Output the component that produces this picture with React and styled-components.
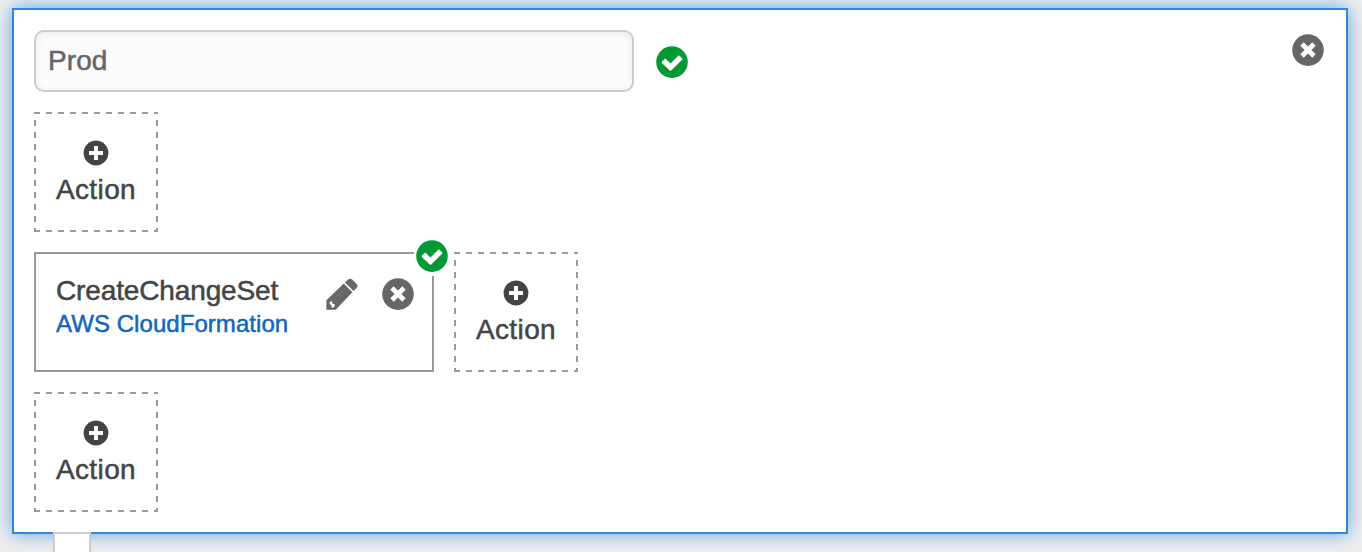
import React from "react";
import styled, { createGlobalStyle } from "styled-components";

const GlobalStyle = createGlobalStyle`
  * { box-sizing: border-box; }
  html, body { margin: 0; height: 100%; overflow: hidden; background: #eeeeee; }
  body { font-family: "Liberation Sans", Arial, sans-serif; color: #444444; }
`;

const Page = styled.main`
  height: 552px;
  padding: 8px 14px 0 12px;
  overflow: hidden;
`;

const Stage = styled.section`
  position: relative;
  display: flex;
  flex-direction: column;
  gap: 20px;
  height: 526px;
  padding: 20px;
  background: #ffffff;
  border: 2px solid #3388dd;
  box-shadow: 0 0 18px rgba(51, 140, 221, 0.74);
`;

const Header = styled.header`
  display: flex;
  align-items: flex-start;
  height: 62px;
`;

const NameInput = styled.input`
  width: 600px;
  height: 62px;
  padding: 0 12px;
  border: 2px solid #cccccc;
  border-radius: 10px;
  outline: none;
  background: #fcfcfc;
  box-shadow: inset 0 2px 8px rgba(0, 0, 0, 0.07);
  color: #666666;
  font: 28px "Liberation Sans", Arial, sans-serif;
  letter-spacing: 0.1px;
  -webkit-text-stroke: 0.5px;
`;

const HeaderStatus = styled.span`
  display: flex;
  margin: 16px auto 0 22px;
`;

const IconButton = styled.button`
  display: flex;
  padding: 0;
  border: 0;
  background: none;
  color: #666666;
  margin-top: ${(p) => p.$top || 0}px;
  margin-right: ${(p) => p.$right || 0}px;
`;

const Row = styled.div`
  display: flex;
  gap: 20px;
  height: 120px;
`;

const across = "repeating-linear-gradient(90deg, #999 0 6px, transparent 6px 12px)";
const down =
  "repeating-linear-gradient(180deg, #999 0 2px, transparent 2px 8px, #999 8px 12px)";

const AddBox = styled.button`
  display: flex;
  flex-direction: column;
  align-items: center;
  width: 124px;
  height: 120px;
  padding: 28px 0 0;
  border: 0;
  color: #444444;
  background: ${across} top / 100% 2px no-repeat, ${across} bottom / 100% 2px no-repeat,
    ${down} left / 2px 100% no-repeat, ${down} right / 2px 100% no-repeat;
  font: 28px/32px "Liberation Sans", Arial, sans-serif;
`;

const AddLabel = styled.span`
  margin-top: 8px;
  letter-spacing: 0.4px;
  -webkit-text-stroke: 0.5px;
`;

const ActionCard = styled.article`
  position: relative;
  display: flex;
  width: 400px;
  height: 120px;
  padding: 20px 18px 0 20px;
  border: 2px solid #999999;
`;

const Details = styled.div`
  flex: 1;
  white-space: nowrap;
`;

const ActionName = styled.div`
  font-size: 28px;
  line-height: 34px;
  letter-spacing: -0.13px;
  -webkit-text-stroke: 0.5px;
`;

const Provider = styled.div`
  color: #1166bb;
  font-size: 24px;
  line-height: 32px;
  letter-spacing: 0.06px;
  -webkit-text-stroke: 0.5px;
`;

const Badge = styled.span`
  position: absolute;
  top: -16px;
  right: -18px;
  display: flex;
  width: 36px;
  height: 38px;
  padding: 2px;
  background: #ffffff;
`;

const Connector = styled.div`
  position: absolute;
  left: 39px;
  bottom: -32px;
  width: 38px;
  height: 32px;
  border: 2px solid #cccccc;
  background: #ffffff;
`;

const CheckIcon = () => (
  <svg width="32" height="32" viewBox="0 0 32 32">
    <circle cx="16" cy="16.1" r="15.8" fill="#009933" />
    <path
      d="M5.8 15.7 8.5 13q.7-.6 1.3 0l4.7 4.6 7.7-7.8q.7-.6 1.4 0l2.6 2.6q.5.7 0 1.3L15.2 24.6q-.7.6-1.4 0l-8-7.7q-.5-.6 0-1.2Z"
      fill="#fff"
    />
  </svg>
);

const CloseIcon = () => (
  <svg width="32" height="32" viewBox="0 0 32 32">
    <circle cx="16" cy="16.1" r="15.8" fill="currentColor" />
    <path d="M10 10 22 22M22 10 10 22" stroke="#fff" strokeWidth="4.8" />
  </svg>
);

const PlusIcon = () => (
  <svg width="26" height="26" viewBox="0 0 26 26">
    <circle cx="13" cy="13" r="12.4" fill="currentColor" />
    <path d="M13 6v14M6 13h14" stroke="#fff" strokeWidth="4" />
  </svg>
);

const PencilIcon = () => (
  <svg width="32" height="32" viewBox="0 0 32 32">
    <path
      d="M.4 31.7V22.3L17.8 5.6l8.6 8.6L9.6 31.7ZM19 4.6l3.2-3.1q2-1.6 4 0l4.4 4.4q1.6 2 0 4l-3.1 3.2Z"
      fill="currentColor"
    />
    <path d="M3.7 23.8 6 23.2l.7 2.5 2.4.7-.9 2.6-2.4.9-.5-2.9-1.6-.7Z" fill="#fff" />
    <path d="M8.5 20.8 17.6 12" stroke="#777" strokeWidth="1" />
  </svg>
);

const AddAction = () => (
  <AddBox type="button">
    <PlusIcon />
    <AddLabel>Action</AddLabel>
  </AddBox>
);

export default function App() {
  return (
    <Page>
      <GlobalStyle />
      <Stage>
        <Header>
          <NameInput aria-label="Stage name" defaultValue="Prod" spellCheck={false} />
          <HeaderStatus>
            <CheckIcon />
          </HeaderStatus>
          <IconButton $top={4} $right={2} aria-label="Delete stage">
            <CloseIcon />
          </IconButton>
        </Header>
        <Row>
          <AddAction />
        </Row>
        <Row>
          <ActionCard>
            <Details>
              <ActionName>CreateChangeSet</ActionName>
              <Provider>AWS CloudFormation</Provider>
            </Details>
            <IconButton $top={4} $right={24} aria-label="Edit action">
              <PencilIcon />
            </IconButton>
            <IconButton $top={4} aria-label="Delete action">
              <CloseIcon />
            </IconButton>
            <Badge>
              <CheckIcon />
            </Badge>
          </ActionCard>
          <AddAction />
        </Row>
        <Row>
          <AddAction />
        </Row>
        <Connector />
      </Stage>
    </Page>
  );
}
